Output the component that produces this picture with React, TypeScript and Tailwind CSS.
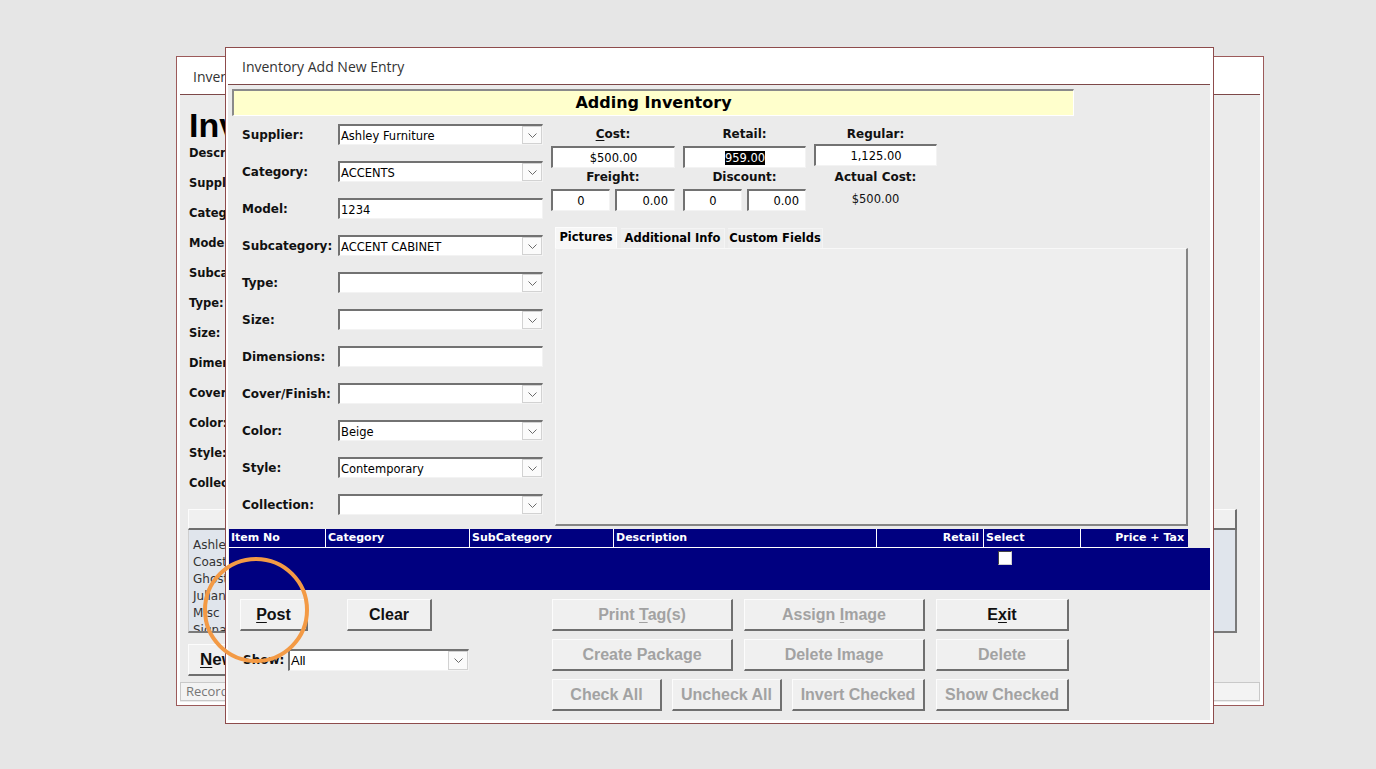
import React from "react";

const dv = "font-['DejaVu_Sans',Verdana,sans-serif]";
const ar = "font-['Liberation_Sans',Arial,sans-serif]";
const os = "font-['Open_Sans','Noto_Sans',sans-serif]";

const sunken =
  "bg-white border-t-2 border-l-2 border-r border-b border-t-[#727272] border-l-[#727272] border-r-[#f3f3f3] border-b-[#f3f3f3]";

const raised =
  "bg-[#f0f0f0] border-t border-l border-t-[#fcfcfc] border-l-[#fcfcfc] border-r-2 border-b-2 border-r-[#6f6f6f] border-b-[#6f6f6f]";

function Chevron() {
  return (
    <svg width="9" height="5" viewBox="0 0 9 5" fill="none" aria-hidden="true">
      <path d="M0.5 0.5 L4.5 4.5 L8.5 0.5" stroke="#6b6b6b" strokeWidth="1" />
    </svg>
  );
}

function DropBtn() {
  return (
    <span className="flex h-full w-[20px] shrink-0 items-center justify-center border border-[#d2d2d2] bg-[#fbfbfb]">
      <Chevron />
    </span>
  );
}

function Field({ value, combo }: { value: string; combo: boolean }) {
  return (
    <div className={`flex h-[21px] w-[205px] items-center ${sunken}`}>
      <span className={`${dv} flex-1 truncate pl-[1px] pt-[2px] text-[11.5px] leading-[16px] text-black`}>{value}</span>
      {combo && <DropBtn />}
    </div>
  );
}

function PriceBox({ children, align = "justify-center", w = "w-full" }: { children?: React.ReactNode; align?: string; w?: string }) {
  return (
    <div className={`flex h-[22px] items-center px-[6px] ${w} ${sunken} ${align}`}>
      <span className={`${dv} pt-[1px] text-[11.5px] leading-[16px] text-black`}>{children}</span>
    </div>
  );
}

function PriceLabel({ children }: { children: React.ReactNode }) {
  return (
    <div className={`${dv} flex h-[16px] items-center justify-center text-[12px] font-bold text-[#111]`}>
      <span>{children}</span>
    </div>
  );
}

function Btn({ w, children, disabled = false, left = false }: { w: string; children: React.ReactNode; disabled?: boolean; left?: boolean }) {
  return (
    <div
      className={`${ar} ${raised} ${w} flex h-[32px] shrink-0 items-center ${left ? "justify-start pl-[11px]" : "justify-center"} text-[16px] font-bold ${
        disabled ? "text-[#a2a2a2]" : "text-[#111]"
      }`}
    >
      <span className="whitespace-pre">{children}</span>
    </div>
  );
}

const U = ({ children }: { children: React.ReactNode }) => (
  <span className="underline decoration-1 underline-offset-2">{children}</span>
);

const fields: [string, string, boolean][] = [
  ["Supplier:", "Ashley Furniture", true],
  ["Category:", "ACCENTS", true],
  ["Model:", "1234", false],
  ["Subcategory:", "ACCENT CABINET", true],
  ["Type:", "", true],
  ["Size:", "", true],
  ["Dimensions:", "", false],
  ["Cover/Finish:", "", true],
  ["Color:", "Beige", true],
  ["Style:", "Contemporary", true],
  ["Collection:", "", true],
];

const bgLabels = [
  "Description:",
  "Supplier:",
  "Category:",
  "Model:",
  "Subcategory:",
  "Type:",
  "Size:",
  "Dimensions:",
  "Cover/Finish:",
  "Color:",
  "Style:",
  "Collection:",
];

const bgList = ["Ashley Furniture", "Coaster", "Ghost", "Juliana", "Misc", "Signature Design"];

const columns = [
  { name: "Item No", w: "w-[96px]", right: false },
  { name: "Category", w: "w-[144px]", right: false },
  { name: "SubCategory", w: "w-[144px]", right: false },
  { name: "Description", w: "w-[263px]", right: false },
  { name: "Retail", w: "w-[107px]", right: true },
  { name: "Select", w: "w-[97px]", right: false },
  { name: "Price + Tax", w: "w-[108px]", right: true },
];

function BackWindow() {
  return (
    <div className="absolute left-[176px] top-[56px] flex h-[650px] w-[1088px] flex-col border border-[#9c5a5a] bg-white px-[3px] pb-[3px]">
      <div className={`${os} flex h-[38px] shrink-0 items-center border-b border-[#7d4848] pl-[13px] pt-[1px] text-[14px] text-[#333]`}>
        Inventory
      </div>
      <div className="flex flex-1 flex-col bg-[#ebebeb]">
        <div className={`${ar} ml-[9px] mt-[15px] h-[30px] text-[34px] font-bold leading-[30px] text-black`}>Inventory</div>
        <div className="-mt-[1px] ml-[9px] flex flex-col">
          {bgLabels.map((l) => (
            <div key={l} className={`${dv} flex h-[30px] items-center text-[11.5px] font-bold text-[#111]`}>
              {l}
            </div>
          ))}
        </div>
        <div className={`ml-[8px] mt-[10px] h-[21px] w-[1049px] ${raised}`} />
        <div className="ml-[8px] flex h-[103px] w-[1049px] flex-col overflow-hidden border-r-2 border-b-2 border-r-[#7a7a7a] border-b-[#7a7a7a] border-l border-l-[#cfcfcf] bg-[#e0e5ec] pl-[4px] pt-[6px]">
          {bgList.map((i) => (
            <div key={i} className={`${dv} flex h-[17px] shrink-0 items-center text-[12px] text-[#333]`}>
              {i}
            </div>
          ))}
        </div>
        <div className="ml-[8px] mt-[11px]">
          <Btn w="w-[90px]" left>
            <span className="text-[17px]">
              <U>N</U>ew
            </span>
          </Btn>
        </div>
        <div className={`mt-[6px] flex h-[19px] items-center border border-[#c9c9c9] bg-[#f3f3f3] pl-[5px] ${os} text-[13px] text-[#777]`}>
          Record:
        </div>
      </div>
    </div>
  );
}

function MainWindow() {
  return (
    <div className="absolute left-[225px] top-[47px] flex h-[677px] w-[989px] flex-col border border-[#8e4c4c] bg-white pl-[2px] pr-[3px] pb-[3px]">
      <div className={`${os} flex h-[37px] shrink-0 items-center border-b border-[#7d4848] pl-[14px] pt-[1px] text-[14px] text-[#333]`}>
        Inventory Add New Entry
      </div>
      <div className="flex flex-1 flex-col bg-[#ebebeb]">
        <div className="ml-[4px] mt-[4px] flex h-[27px] w-[842px] items-center justify-center border-t-2 border-l-2 border-r border-b border-t-[#8a8a8a] border-l-[#8a8a8a] border-r-white border-b-white bg-[#ffffcc]">
          <span className={`${dv} text-[16px] font-bold text-black`}>Adding Inventory</span>
        </div>

        <div className="flex">
          <div className="ml-[14px] flex w-[301px] flex-col gap-[16px] pt-[8px]">
            {fields.map(([label, value, combo]) => (
              <div key={label} className="flex h-[21px] items-center">
                <span className={`${dv} w-[96px] shrink-0 text-[12px] font-bold text-[#111]`}>{label}</span>
                <Field value={value} combo={combo} />
              </div>
            ))}
          </div>

          <div className="ml-[8px] flex flex-col pt-[10px]">
            <div className="flex items-start gap-x-[8px]">
              <div className="flex w-[124px] flex-col">
                <PriceLabel>
                  <U>C</U>ost:
                </PriceLabel>
                <div className="mt-[4px]">
                  <PriceBox>$500.00</PriceBox>
                </div>
                <div className="mt-[1px]">
                  <PriceLabel>Freight:</PriceLabel>
                </div>
                <div className="mt-[4px] flex gap-[5px]">
                  <PriceBox w="w-[59px]">0</PriceBox>
                  <PriceBox w="w-[60px]" align="justify-end">0.00</PriceBox>
                </div>
              </div>
              <div className="flex w-[123px] flex-col">
                <PriceLabel>Retail:</PriceLabel>
                <div className="mt-[4px]">
                  <PriceBox>
                    <span className="bg-black text-white">959.00</span>
                  </PriceBox>
                </div>
                <div className="mt-[1px]">
                  <PriceLabel>Discount:</PriceLabel>
                </div>
                <div className="mt-[4px] flex gap-[5px]">
                  <PriceBox w="w-[59px]">0</PriceBox>
                  <PriceBox w="w-[59px]" align="justify-end">0.00</PriceBox>
                </div>
              </div>
              <div className="flex w-[123px] flex-col">
                <PriceLabel>Regular:</PriceLabel>
                <div className="mt-[2px]">
                  <PriceBox>1,125.00</PriceBox>
                </div>
                <div className="mt-[3px]">
                  <PriceLabel>Actual Cost:</PriceLabel>
                </div>
                <div className={`${dv} mt-[4px] flex h-[22px] items-center justify-center text-[11.5px] text-[#111]`}>$500.00</div>
              </div>
            </div>

            <div className={`${dv} ml-[4px] mt-[16px] flex h-[21px] items-end text-[11.5px] font-bold text-black`}>
              <div className="flex h-[21px] w-[62px] items-center justify-center border-t border-l border-r border-[#fdfdfd] bg-[#f7f7f7]">
                Pictures
              </div>
              <div className="ml-[4px] flex h-[20px] w-[104px] items-center justify-center border-t border-r border-[#f4f4f4] bg-[#eeeeee]">
                Additional Info
              </div>
              <div className="ml-[3px] flex h-[20px] w-[95px] items-center justify-center border-t border-r border-[#f4f4f4] bg-[#eeeeee]">
                Custom Fields
              </div>
            </div>
            <div className="ml-[4px] h-[278px] w-[633px] border-t border-l border-t-[#f8f8f8] border-l-[#f8f8f8] border-r-2 border-b-2 border-r-[#858585] border-b-[#858585] bg-[#eeeeee]" />
          </div>
        </div>

        <div className="ml-[1px] mt-[3px] flex h-[19px] w-[959px] border-b border-white bg-[#000080]">
          {columns.map((c, i) => (
            <div
              key={c.name}
              className={`${dv} ${c.w} flex items-center px-[2px] pt-[1px] text-[11px] font-bold text-white ${
                c.right ? "justify-end pr-[4px]" : ""
              } ${i > 0 ? "border-l border-white" : ""}`}
            >
              {c.name}
            </div>
          ))}
        </div>
        <div className="ml-[1px] h-[42px] w-[981px] bg-[#000080] pl-[769px] pt-[3px]">
          <div className="h-[14px] w-[14px] border-t border-l border-t-[#444] border-l-[#444] border-r border-b border-r-[#cfcfcf] border-b-[#cfcfcf] bg-white" />
        </div>

        <div className="mt-[9px] flex">
          <div className="ml-[12px] flex w-[300px] flex-col">
            <div className="flex">
              <Btn w="w-[68px]">
                <U>P</U>ost
              </Btn>
              <div className="ml-[39px]">
                <Btn w="w-[85px]">Clear</Btn>
              </div>
            </div>
            <div className="mt-[18px] flex h-[22px] items-center">
              <span className={`${dv} ml-[3px] w-[45px] text-[12px] font-bold text-[#111]`}>Show:</span>
              <div className={`flex h-[22px] w-[181px] items-center ${sunken}`}>
                <span className={`${ar} flex-1 pl-[1px] text-[13px] text-black`}>All</span>
                <DropBtn />
              </div>
            </div>
          </div>

          <div className="ml-[12px] flex flex-col gap-[8px]">
            <div className="flex gap-[11px]">
              <Btn w="w-[181px]" disabled>
                Print <U>T</U>ag(s)
              </Btn>
              <Btn w="w-[181px]" disabled>
                Assign <U>I</U>mage
              </Btn>
              <Btn w="w-[133px]">
                E<U>x</U>it
              </Btn>
            </div>
            <div className="flex gap-[11px]">
              <Btn w="w-[181px]" disabled>
                Create Package
              </Btn>
              <Btn w="w-[181px]" disabled>
                Delete Image
              </Btn>
              <Btn w="w-[133px]" disabled>
                Delete
              </Btn>
            </div>
            <div className="flex">
              <Btn w="w-[110px]" disabled>
                Check All
              </Btn>
              <div className="ml-[10px]">
                <Btn w="w-[110px]" disabled>
                  Uncheck All
                </Btn>
              </div>
              <div className="ml-[10px]">
                <Btn w="w-[133px]" disabled>
                  Invert Checked
                </Btn>
              </div>
              <div className="ml-[11px]">
                <Btn w="w-[133px]" disabled>
                  Show Checked
                </Btn>
              </div>
            </div>
          </div>
        </div>
      </div>
    </div>
  );
}

export default function App() {
  return (
    <div className="relative h-[769px] w-[1376px] overflow-hidden bg-[#e6e6e6]">
      <BackWindow />
      <MainWindow />
      <div className="pointer-events-none absolute left-[203px] top-[557px] h-[106px] w-[106px] rounded-full border-[4px] border-[#f39a45]" />
    </div>
  );
}
